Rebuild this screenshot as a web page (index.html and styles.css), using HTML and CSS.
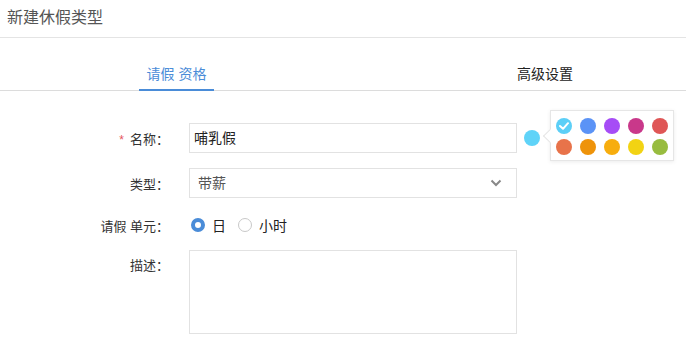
FILE: index.html
```html
<!DOCTYPE html>
<html lang="zh-CN">
<head>
    <meta charset="UTF-8">
    <title>新建休假类型</title>
    <link rel="stylesheet" href="styles.css">
</head>
<body>
    <div class="header">新建休假类型</div>

    <div class="tabs">
        <div class="tab active">请假 资格</div>
        <div class="tab tab-right">高级设置</div>
    </div>

    <div class="form">
        <div class="row">
            <label class="label"><span class="req">*</span>名称：</label>
            <div class="field">
                <div class="input">哺乳假</div>
                <span class="color-dot"></span>
                <div class="palette">
                    <span class="swatch c1 checked">
                        <svg width="10" height="8" viewBox="0 0 10 8"><path d="M1 4 L4 6.8 L9 1.2" fill="none" stroke="#fff" stroke-width="2" stroke-linecap="round" stroke-linejoin="round"/></svg>
                    </span>
                    <span class="swatch c2"></span>
                    <span class="swatch c3"></span>
                    <span class="swatch c4"></span>
                    <span class="swatch c5"></span>
                    <span class="swatch c6"></span>
                    <span class="swatch c7"></span>
                    <span class="swatch c8"></span>
                    <span class="swatch c9"></span>
                    <span class="swatch c10"></span>
                </div>
            </div>
        </div>

        <div class="row">
            <label class="label">类型：</label>
            <div class="field">
                <div class="input select">
                    <span class="value">带薪</span>
                    <svg class="chevron" width="12" height="8" viewBox="0 0 12 8"><path d="M1.5 1.5 L6 6 L10.5 1.5" fill="none" stroke="#888" stroke-width="2"/></svg>
                </div>
            </div>
        </div>

        <div class="row radio-row">
            <label class="label">请假 单元：</label>
            <div class="field">
                <span class="radio on"></span><span class="radio-text">日</span>
                <span class="radio"></span><span class="radio-text">小时</span>
            </div>
        </div>

        <div class="row top">
            <label class="label">描述：</label>
            <div class="field">
                <div class="textarea"></div>
            </div>
        </div>
    </div>
</body>
</html>
```

FILE: styles.css
```css
body {
    margin: 0;
    font-family: "Liberation Sans", "Noto Sans CJK SC", sans-serif;
    color: #333;
    background-color: #fff;
}
.header {
    height: 37px;
    line-height: 36px;
    padding-left: 7px;
    font-size: 16px;
    color: #555;
    border-bottom: 1px solid #e4e4e4;
}
.tabs {
    display: flex;
    height: 52px;
    padding-left: 139px;
    padding-right: 113px;
    border-bottom: 1px solid #dcdcdc;
}
.tab {
    font-size: 14px;
    line-height: 20px;
    padding-top: 26px;
    color: #222;
}
.tab.active {
    width: 75px;
    text-align: center;
    color: #4a8cd8;
    border-bottom: 2px solid #4a8cd8;
    margin-bottom: -1px;
}
.tab-right {
    margin-left: auto;
}
.form {
    padding-top: 32px;
}
.row {
    display: flex;
    align-items: center;
    margin-bottom: 15px;
}
.row.top {
    align-items: flex-start;
}
.radio-row {
    height: 22px;
    margin-top: 16px;
    margin-bottom: 14px;
}
.label {
    width: 189px;
    padding-right: 20px;
    box-sizing: border-box;
    text-align: right;
    font-size: 13px;
    color: #333;
}
.row.top .label {
    padding-top: 5px;
}
.req {
    color: #e5545c;
    margin-right: 6px;
    font-size: 12px;
}
.field {
    display: flex;
    align-items: center;
    position: relative;
}
.input {
    width: 328px;
    height: 30px;
    box-sizing: border-box;
    border: 1px solid #e2e2e2;
    padding-left: 4px;
    font-size: 14px;
    line-height: 28px;
    color: #222;
}
.select {
    display: flex;
    justify-content: space-between;
    align-items: center;
    padding-left: 8px;
    padding-right: 14px;
    color: #555;
}
.color-dot {
    width: 16px;
    height: 16px;
    border-radius: 50%;
    background-color: #5fd3f8;
    margin-left: 7px;
}
.palette {
    position: absolute;
    left: 361px;
    top: -13px;
    width: 124px;
    height: 51px;
    box-sizing: border-box;
    padding: 7px 0 0 5px;
    display: grid;
    grid-template-columns: repeat(5, 16px);
    grid-auto-rows: 16px;
    column-gap: 8px;
    row-gap: 5px;
    background-color: #fff;
    border: 1px solid #e6e6e6;
    box-shadow: 0 1px 4px rgba(0, 0, 0, 0.08);
}
.palette::before {
    content: "";
    position: absolute;
    left: -6px;
    top: 20px;
    width: 9px;
    height: 9px;
    background-color: #fff;
    border-left: 1px solid #e6e6e6;
    border-bottom: 1px solid #e6e6e6;
    transform: rotate(45deg);
}
.swatch {
    width: 16px;
    height: 16px;
    border-radius: 50%;
    display: flex;
    align-items: center;
    justify-content: center;
}
.c1 { background-color: #5ccff7; }
.c2 { background-color: #5b93f6; }
.c3 { background-color: #a64cf6; }
.c4 { background-color: #c9388a; }
.c5 { background-color: #df5656; }
.c6 { background-color: #e8734a; }
.c7 { background-color: #ee930a; }
.c8 { background-color: #f7ad0e; }
.c9 { background-color: #f2d313; }
.c10 { background-color: #98bc3f; }
.radio {
    width: 14px;
    height: 14px;
    box-sizing: border-box;
    border-radius: 50%;
    border: 1.5px solid #c8c8c8;
    margin-left: 2px;
}
.radio.on {
    border: 4.5px solid #4a8cd8;
    background-color: #fff;
}
.radio-text {
    font-size: 14px;
    margin-left: 7px;
    margin-right: 10px;
    color: #222;
}
.textarea {
    width: 328px;
    height: 84px;
    box-sizing: border-box;
    border: 1px solid #e2e2e2;
}
```
